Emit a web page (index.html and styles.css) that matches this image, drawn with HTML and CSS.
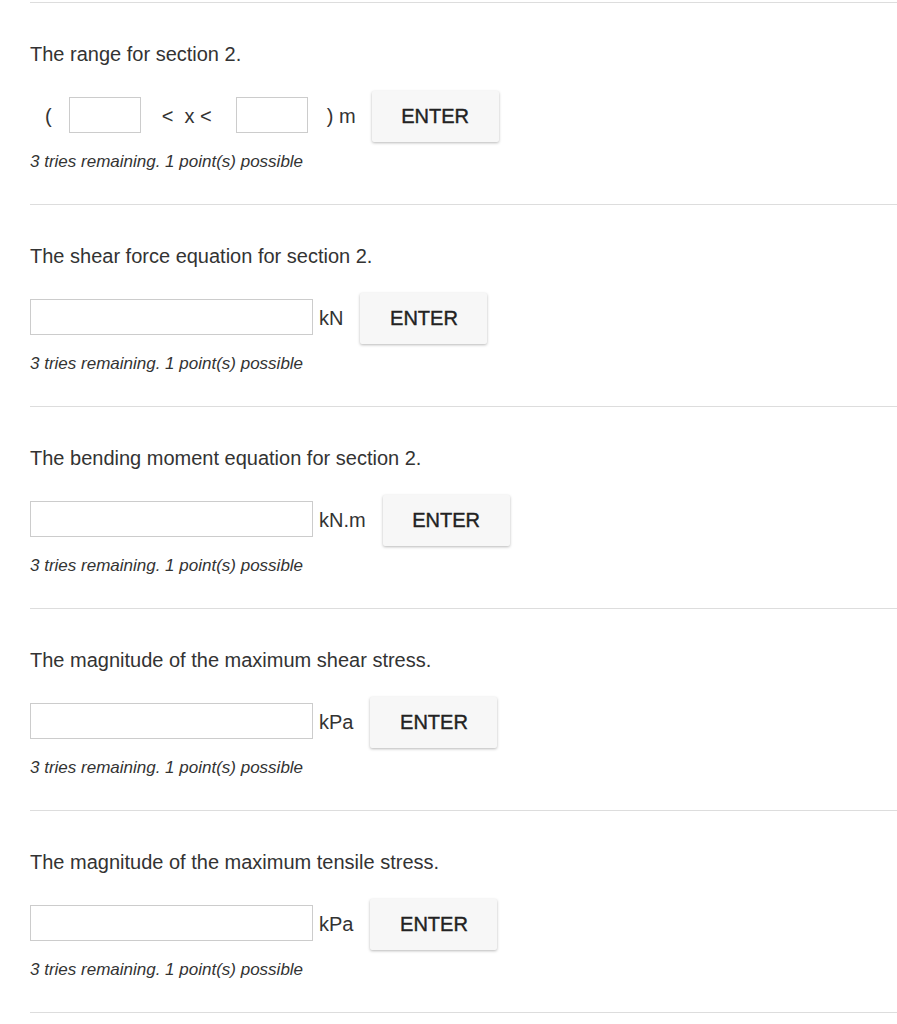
FILE: index.html
```html
<!DOCTYPE html>
<html>
<head>
<meta charset="utf-8">
<link rel="stylesheet" href="styles.css">
</head>
<body>
<div class="page">
  <section class="problem">
    <p class="question">The range for section 2.</p>
    <div class="row">
      <span class="paren">(</span>
      <input class="field small" type="text">
      <span class="ineq">&lt;&nbsp; x &lt;</span>
      <input class="field small" type="text">
      <span class="unit range-unit">) m</span>
      <button class="enter">ENTER</button>
    </div>
    <p class="tries">3 tries remaining. 1 point(s) possible</p>
  </section>
  <section class="problem">
    <p class="question">The shear force equation for section 2.</p>
    <div class="row">
      <input class="field wide" type="text">
      <span class="unit">kN</span>
      <button class="enter">ENTER</button>
    </div>
    <p class="tries">3 tries remaining. 1 point(s) possible</p>
  </section>
  <section class="problem">
    <p class="question">The bending moment equation for section 2.</p>
    <div class="row">
      <input class="field wide" type="text">
      <span class="unit">kN.m</span>
      <button class="enter">ENTER</button>
    </div>
    <p class="tries">3 tries remaining. 1 point(s) possible</p>
  </section>
  <section class="problem">
    <p class="question">The magnitude of the maximum shear stress.</p>
    <div class="row">
      <input class="field wide" type="text">
      <span class="unit">kPa</span>
      <button class="enter">ENTER</button>
    </div>
    <p class="tries">3 tries remaining. 1 point(s) possible</p>
  </section>
  <section class="problem">
    <p class="question">The magnitude of the maximum tensile stress.</p>
    <div class="row">
      <input class="field wide" type="text">
      <span class="unit">kPa</span>
      <button class="enter">ENTER</button>
    </div>
    <p class="tries">3 tries remaining. 1 point(s) possible</p>
  </section>
  <div class="end-rule"></div>
</div>
</body>
</html>
```

FILE: styles.css
```css
html, body {
  margin: 0;
  padding: 0;
  background: #ffffff;
}

body {
  font-family: "Liberation Sans", Arial, Helvetica, sans-serif;
  color: #333333;
}

.page {
  padding: 2px 0 0 30px;
}

.problem {
  border-top: 1px solid #dddddd;
  padding: 39px 0 32px 0;
}

.end-rule {
  border-top: 1px solid #dddddd;
}

.question {
  margin: 0;
  font-size: 20px;
  line-height: 24px;
  color: #333333;
}

.row {
  margin-top: 25px;
  height: 51px;
  display: flex;
  align-items: center;
}

.paren {
  font-size: 20px;
  margin-left: 15px;
  margin-right: 17px;
}

.ineq {
  font-size: 20px;
  margin: 0 24px 0 21px;
}

.field {
  box-sizing: border-box;
  height: 36px;
  border: 1px solid #cccccc;
  border-radius: 0;
  background: #ffffff;
  margin: 0 0 3px 0;
  padding: 0 6px;
  font-family: inherit;
  font-size: 16px;
}

.field.small {
  width: 72px;
}

.field.wide {
  width: 283px;
}

.unit {
  font-size: 20px;
  margin: 0 17px 0 6px;
}

.unit.range-unit {
  margin: 0 16px 0 19px;
}

.enter {
  box-sizing: border-box;
  width: 127px;
  height: 51px;
  border: none;
  border-radius: 2px;
  background: #f7f7f7;
  box-shadow: 0 1px 3px rgba(0, 0, 0, 0.28);
  font-family: "Liberation Sans", Arial, Helvetica, sans-serif;
  font-size: 20px;
  font-weight: normal;
  color: #222222;
  padding: 0;
  -webkit-text-stroke: 0.4px #222222;
}

.tries {
  margin: 10px 0 0 0;
  font-size: 17px;
  line-height: 20px;
  font-style: italic;
  color: #333333;
}
```
